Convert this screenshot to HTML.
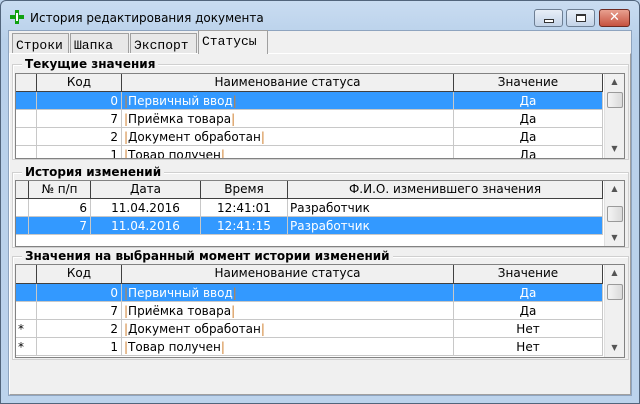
<!DOCTYPE html><html><head><meta charset="utf-8"><style>
*{margin:0;padding:0;box-sizing:border-box}
body{width:640px;height:404px;overflow:hidden;background:#bcd3ec;font-family:Tahoma,"DejaVu Sans","Liberation Sans",sans-serif;font-size:12px;color:#000;position:relative}
.a{position:absolute}
.frame{left:0;top:0;width:640px;height:404px;background:linear-gradient(#c9dcf1,#b8d0ea 40px,#bcd3ec);border:1px solid #52657c;border-radius:6px 6px 0 0}
.client{left:8px;top:30px;width:624px;height:366px;background:#f0f0f0;border:1px solid #8ea4bf}
.tab{top:33px;height:20px;border:1px solid #a0a0a0;border-bottom:none;background:#e8e8e8;font-family:"Liberation Mono","DejaVu Sans Mono",monospace;font-size:13px;padding:4px 3px 0}
.panel{left:9px;top:53px;width:622px;height:342px;border:1px solid #a0a0a0;border-top-color:#fff;border-left-color:#fff;background:#f0f0f0}
.grp{border:1px solid #d0d0d0;box-shadow:inset 1px 1px 0 #fff}
.gt{font-weight:bold;background:#f0f0f0;padding:0 3px;font-size:12px;line-height:12px}
.grid{background:#fff;border:1px solid #828282;overflow:hidden}
.hdr{background:#f0f0f0;border-right:1px solid #404040;border-bottom:1px solid #404040;text-align:center;line-height:17px;height:18px}
.c{height:18px;line-height:18px;border-right:1px solid #c8c8c8;border-bottom:1px solid #c8c8c8;white-space:nowrap;overflow:hidden}
.sel{background:#3399ff;color:#fff}
.r{text-align:right;padding-right:3px}.m{text-align:center}.l{padding-left:2px}
.b{color:#d08030}
.sb{background:#f0f0f0;border-left:1px solid #e0e0e0}
.thumb{background:linear-gradient(90deg,#f4f4f4,#dadada);border:1px solid #9a9a9a;border-radius:2px}
.arr{font-size:8px;color:#555;text-align:center;width:17px}
</style></head><body>
<div class="a frame"></div>
<svg class="a" style="left:10px;top:10px" width="14" height="14"><rect x="5" y="0" width="4" height="14" fill="#10a010"/><rect x="0" y="5" width="14" height="4" fill="#10a010"/><rect x="6" y="3" width="2" height="8" fill="#fff"/></svg>
<div class="a" style="left:30px;top:11px;font-size:12px">История редактирования документа</div>
<div class="a" style="left:534px;top:9px;width:29px;height:18px;border:1px solid #6d7e93;border-radius:3px;background:linear-gradient(#e8eff8,#c3d3e7)"><div class="a" style="left:9px;top:9px;width:10px;height:4px;border:1px solid #333;background:#fff"></div></div>
<div class="a" style="left:566px;top:9px;width:29px;height:18px;border:1px solid #6d7e93;border-radius:3px;background:linear-gradient(#e8eff8,#c3d3e7)"><div class="a" style="left:9px;top:4px;width:10px;height:8px;border:1px solid #333;border-top-width:2px;background:#fff"></div></div>
<div class="a" style="left:599px;top:9px;width:31px;height:18px;border:1px solid #6d2a22;border-radius:3px;background:linear-gradient(#e8a090,#c6523f);color:#fff;font-weight:bold;text-align:center;line-height:16px;font-size:13px">✕</div>
<div class="a client"></div>
<div class="a panel"></div>
<div class="a tab" style="left:12px;width:57px">Строки</div>
<div class="a tab" style="left:70px;width:59px">Шапка</div>
<div class="a tab" style="left:130px;width:67px">Экспорт</div>
<div class="a tab" style="left:198px;width:70px;top:30px;height:24px;background:#f0f0f0;border-bottom:none;padding-top:3px">Статусы</div>

<div class="a grp" style="left:12px;top:64px;width:617px;height:96px"></div>
<div class="a gt" style="left:22px;top:58px">Текущие значения</div>
<div class="a grid" style="left:15px;top:73px;width:610px;height:86px">
 <div class="a hdr" style="left:0;top:0;width:21px"></div>
 <div class="a hdr" style="left:21px;top:0;width:85px">Код</div>
 <div class="a hdr" style="left:106px;top:0;width:332px">Наименование статуса</div>
 <div class="a hdr" style="left:438px;top:0;width:149px">Значение</div>
 <div class="a c sel" style="left:0;top:18px;width:21px"></div><div class="a c sel r" style="left:21px;top:18px;width:85px">0</div><div class="a c sel l" style="left:106px;top:18px;width:332px"><span class="b">|</span>Первичный ввод<span class="b">|</span></div><div class="a c sel m" style="left:438px;top:18px;width:149px">Да</div>
 <div class="a c" style="left:0;top:36px;width:21px"></div><div class="a c r" style="left:21px;top:36px;width:85px">7</div><div class="a c l" style="left:106px;top:36px;width:332px"><span class="b">|</span>Приёмка товара<span class="b">|</span></div><div class="a c m" style="left:438px;top:36px;width:149px">Да</div>
 <div class="a c" style="left:0;top:54px;width:21px"></div><div class="a c r" style="left:21px;top:54px;width:85px">2</div><div class="a c l" style="left:106px;top:54px;width:332px"><span class="b">|</span>Документ обработан<span class="b">|</span></div><div class="a c m" style="left:438px;top:54px;width:149px">Да</div>
 <div class="a c" style="left:0;top:72px;width:21px"></div><div class="a c r" style="left:21px;top:72px;width:85px">1</div><div class="a c l" style="left:106px;top:72px;width:332px"><span class="b">|</span>Товар получен<span class="b">|</span></div><div class="a c m" style="left:438px;top:72px;width:149px">Да</div>
 <div class="a sb" style="left:588px;top:0;width:21px;height:86px"><div class="a arr" style="left:1px;top:3px">▲</div><div class="a thumb" style="left:2px;top:18px;width:16px;height:16px"></div><div class="a arr" style="left:1px;top:70px">▼</div></div>
</div>

<div class="a grp" style="left:12px;top:172px;width:617px;height:76px"></div>
<div class="a gt" style="left:22px;top:166px">История изменений</div>
<div class="a grid" style="left:15px;top:180px;width:610px;height:67px">
 <div class="a hdr" style="left:0;top:0;width:13px"></div>
 <div class="a hdr" style="left:13px;top:0;width:62px">№ п/п</div>
 <div class="a hdr" style="left:75px;top:0;width:110px">Дата</div>
 <div class="a hdr" style="left:185px;top:0;width:87px">Время</div>
 <div class="a hdr" style="left:272px;top:0;width:315px">Ф.И.О. изменившего значения</div>
 <div class="a c" style="left:0;top:18px;width:13px"></div><div class="a c r" style="left:13px;top:18px;width:62px">6</div><div class="a c m" style="left:75px;top:18px;width:110px">11.04.2016</div><div class="a c m" style="left:185px;top:18px;width:87px">12:41:01</div><div class="a c l" style="left:272px;top:18px;width:315px">Разработчик</div>
 <div class="a c sel" style="left:0;top:36px;width:13px"></div><div class="a c sel r" style="left:13px;top:36px;width:62px">7</div><div class="a c sel m" style="left:75px;top:36px;width:110px">11.04.2016</div><div class="a c sel m" style="left:185px;top:36px;width:87px">12:41:15</div><div class="a c sel l" style="left:272px;top:36px;width:315px">Разработчик</div>
 <div class="a sb" style="left:588px;top:0;width:21px;height:67px"><div class="a arr" style="left:1px;top:3px">▲</div><div class="a thumb" style="left:2px;top:25px;width:16px;height:16px"></div><div class="a arr" style="left:1px;top:52px">▼</div></div>
</div>

<div class="a grp" style="left:12px;top:256px;width:617px;height:104px"></div>
<div class="a gt" style="left:22px;top:250px">Значения на выбранный момент истории изменений</div>
<div class="a grid" style="left:15px;top:264px;width:610px;height:94px">
 <div class="a hdr" style="left:0;top:0;width:21px;height:19px"></div>
 <div class="a hdr" style="left:21px;top:0;width:85px;height:19px">Код</div>
 <div class="a hdr" style="left:106px;top:0;width:332px;height:19px">Наименование статуса</div>
 <div class="a hdr" style="left:438px;top:0;width:149px;height:19px">Значение</div>
 <div class="a c sel" style="left:0;top:19px;width:21px"></div><div class="a c sel r" style="left:21px;top:19px;width:85px">0</div><div class="a c sel l" style="left:106px;top:19px;width:332px"><span class="b">|</span>Первичный ввод<span class="b">|</span></div><div class="a c sel m" style="left:438px;top:19px;width:149px">Да</div>
 <div class="a c" style="left:0;top:37px;width:21px"></div><div class="a c r" style="left:21px;top:37px;width:85px">7</div><div class="a c l" style="left:106px;top:37px;width:332px"><span class="b">|</span>Приёмка товара<span class="b">|</span></div><div class="a c m" style="left:438px;top:37px;width:149px">Да</div>
 <div class="a c l" style="left:0;top:55px;width:21px">*</div><div class="a c r" style="left:21px;top:55px;width:85px">2</div><div class="a c l" style="left:106px;top:55px;width:332px"><span class="b">|</span>Документ обработан<span class="b">|</span></div><div class="a c m" style="left:438px;top:55px;width:149px">Нет</div>
 <div class="a c l" style="left:0;top:73px;width:21px">*</div><div class="a c r" style="left:21px;top:73px;width:85px">1</div><div class="a c l" style="left:106px;top:73px;width:332px"><span class="b">|</span>Товар получен<span class="b">|</span></div><div class="a c m" style="left:438px;top:73px;width:149px">Нет</div>
 <div class="a sb" style="left:588px;top:0;width:21px;height:94px"><div class="a arr" style="left:1px;top:3px">▲</div><div class="a thumb" style="left:2px;top:19px;width:16px;height:16px"></div><div class="a arr" style="left:1px;top:78px">▼</div></div>
</div>
</body></html>
